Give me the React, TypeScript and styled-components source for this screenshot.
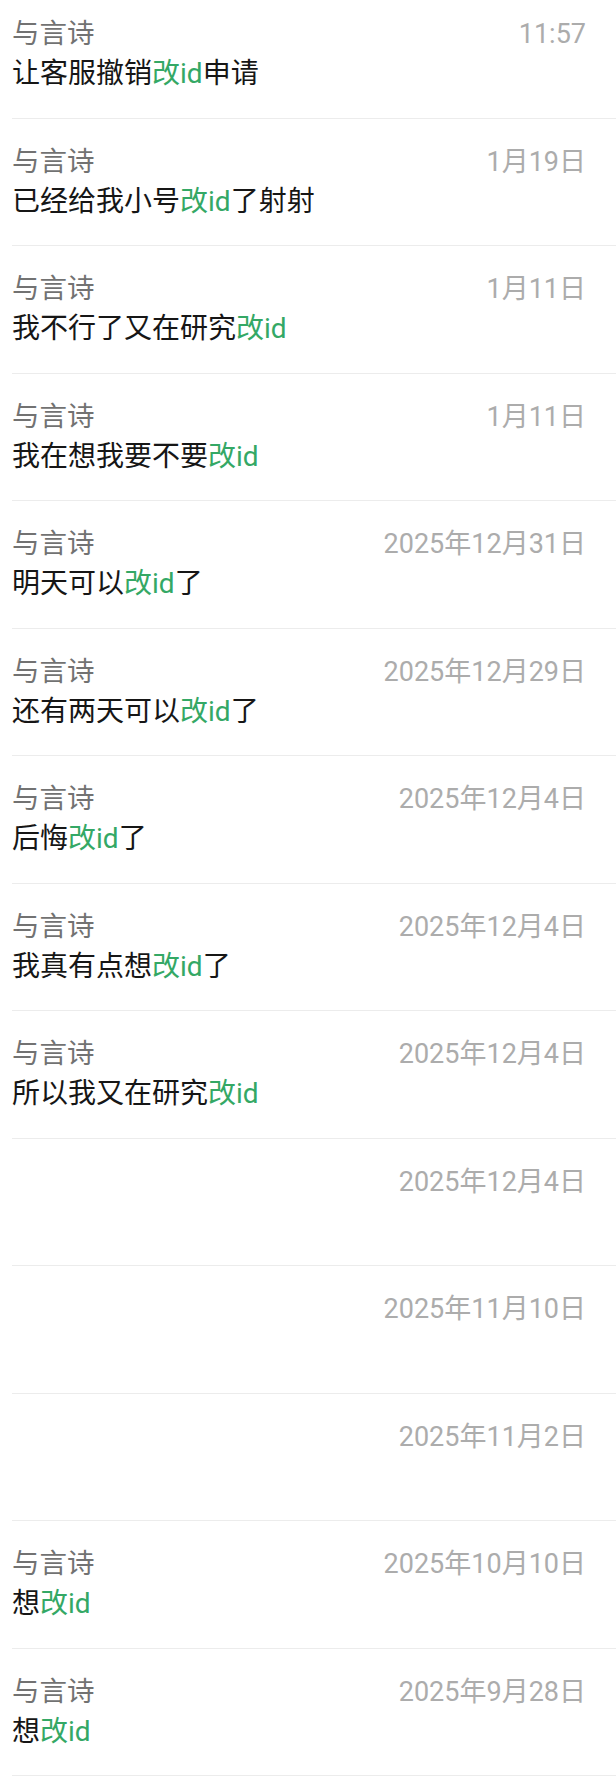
import * as React from 'react';
import styled, { createGlobalStyle } from 'styled-components';

interface Entry {
  time: string;
  name?: string;
  before?: string;
  after?: string;
}

const KEYWORD = '改id';

const entries: Entry[] = [
  { time: '11:57', name: '与言诗', before: '让客服撤销', after: '申请' },
  { time: '1月19日', name: '与言诗', before: '已经给我小号', after: '了射射' },
  { time: '1月11日', name: '与言诗', before: '我不行了又在研究', after: '' },
  { time: '1月11日', name: '与言诗', before: '我在想我要不要', after: '' },
  { time: '2025年12月31日', name: '与言诗', before: '明天可以', after: '了' },
  { time: '2025年12月29日', name: '与言诗', before: '还有两天可以', after: '了' },
  { time: '2025年12月4日', name: '与言诗', before: '后悔', after: '了' },
  { time: '2025年12月4日', name: '与言诗', before: '我真有点想', after: '了' },
  { time: '2025年12月4日', name: '与言诗', before: '所以我又在研究', after: '' },
  { time: '2025年12月4日' },
  { time: '2025年11月10日' },
  { time: '2025年11月2日' },
  { time: '2025年10月10日', name: '与言诗', before: '想', after: '' },
  { time: '2025年9月28日', name: '与言诗', before: '想', after: '' }
];

const GlobalStyle = createGlobalStyle`
  html, body {
    margin: 0;
    padding: 0;
    background: #ffffff;
  }
  body {
    font-family: Roboto, "Noto Sans CJK SC", "Noto Sans", sans-serif;
    -webkit-font-smoothing: antialiased;
  }
`;

const App: React.FC = () => (
  <>
    <GlobalStyle />
    <List>
      {entries.map((entry, i) => (
        <Row key={i}>
          <Header>
            <Name>{entry.name}</Name>
            <Time>{entry.time}</Time>
          </Header>
          {entry.before !== undefined && (
            <Message>
              {entry.before}
              <Highlight>{KEYWORD}</Highlight>
              {entry.after}
            </Message>
          )}
        </Row>
      ))}
    </List>
  </>
);

export default App;

const List = styled.div`
  margin-top: -9px;
  overflow: hidden;
`;

const Row = styled.div`
  box-sizing: border-box;
  height: 127.5px;
  margin-left: 12px;
  padding: 23px 30px 0 0;
  border-bottom: 1px solid #ececec;
`;

const Header = styled.div`
  display: flex;
  align-items: center;
  justify-content: space-between;
  height: 40px;
`;

const Name = styled.span`
  font-size: 27.5px;
  line-height: 40px;
  color: #727272;
`;

const Time = styled.span`
  font-size: 27px;
  line-height: 40px;
  color: #acacac;
`;

const Message = styled.div`
  font-size: 28px;
  line-height: 40px;
  color: #161616;
  white-space: nowrap;
`;

const Highlight = styled.span`
  color: #34a865;
`;
